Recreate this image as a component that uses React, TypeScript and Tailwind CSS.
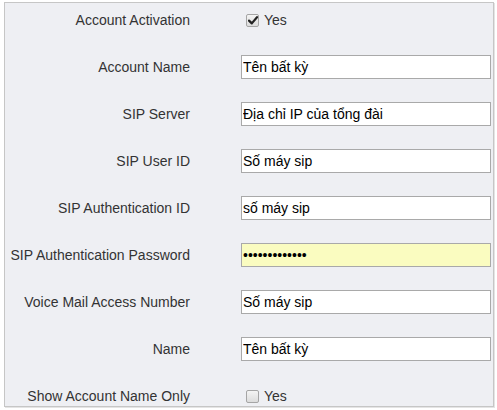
import { useState } from "react";

interface Field {
    label: string;
    kind: "check" | "text" | "password";
    value?: string;
    checked?: boolean;
}

const fields: Field[] = [
    { label: "Account Activation", kind: "check", checked: true },
    { label: "Account Name", kind: "text", value: "Tên bất kỳ" },
    { label: "SIP Server", kind: "text", value: "Địa chỉ IP của tổng đài" },
    { label: "SIP User ID", kind: "text", value: "Số máy sip" },
    { label: "SIP Authentication ID", kind: "text", value: "số máy sip" },
    { label: "SIP Authentication Password", kind: "password", value: "1234567890123" },
    { label: "Voice Mail Access Number", kind: "text", value: "Số máy sip" },
    { label: "Name", kind: "text", value: "Tên bất kỳ" },
    { label: "Show Account Name Only", kind: "check", checked: false },
];

const CheckBox = ({ initial }: { initial: boolean }) => {
    const [on, setOn] = useState(initial);
    return (
        <label className="flex items-center cursor-pointer select-none">
            <span
                onClick={() => setOn(!on)}
                className="w-[13px] h-[13px] mr-[5px] rounded-[2px] border border-[#a5a5a5] bg-gradient-to-b from-[#f4f4f4] to-[#dcdcdc] flex items-center justify-center"
            >
                {on && (
                    <svg width="10" height="9" viewBox="0 0 10 9">
                        <path d="M1 4.6 L3.8 7.4 L9 1.2" fill="none" stroke="#222" strokeWidth="2.2" strokeLinecap="round" strokeLinejoin="round" />
                    </svg>
                )}
            </span>
            <span className="text-[14px] text-[#333]">Yes</span>
        </label>
    );
};

const App = () => {
    return (
        <div className="w-[497px] h-[410px] bg-white pl-[4px] pt-[2px] font-['Liberation_Sans',Arial,sans-serif]">
            <div className="w-[490px] h-[405px] border border-[#c6c6c6] bg-[#eeeff3] pt-[5px] shadow-[1px_1px_0_#e4e4e4]">
                <div className="flex flex-col gap-[23px]">
                    {fields.map((f) => (
                        <div key={f.label} className="h-6 grid grid-cols-[185px_1fr] gap-[51px] items-center">
                            <div className="text-right text-[14px] text-[#333] whitespace-nowrap">{f.label}</div>
                            {f.kind === "check" ? (
                                <div className="pl-[5px]">
                                    <CheckBox initial={!!f.checked} />
                                </div>
                            ) : (
                                <input
                                    type={f.kind}
                                    defaultValue={f.value}
                                    className={`w-[250px] h-6 border border-[#a9a9a9] px-[1px] text-[14px] text-black outline-none ${
                                        f.kind === "password" ? "bg-[#fafcc0]" : "bg-white"
                                    }`}
                                />
                            )}
                        </div>
                    ))}
                </div>
            </div>
        </div>
    );
};

export default App;
